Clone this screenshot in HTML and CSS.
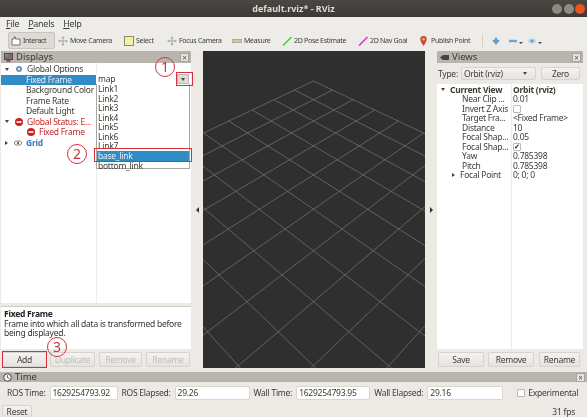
FILE: index.html
```html
<!DOCTYPE html>
<html lang="en">
<head>
<meta charset="utf-8">
<title>default.rviz - RViz</title>
<link rel="stylesheet" href="styles.css">
</head>
<body>
<div class="window">
  <header class="titlebar">
    <span class="title">default.rviz* - RViz</span>
    <div class="winbtns"><i class="wb"></i><i class="wb"></i><i class="wb close"></i></div>
  </header>
  <nav class="menubar"><span><u>F</u>ile</span><span><u>P</u>anels</span><span><u>H</u>elp</span></nav>
  <div class="toolbar">
    <div class="tool active">
      <svg class="ic" viewBox="0 0 10 10"><path d="M1 9V3h2V1h1.500v2H9v6z" fill="#fff" stroke="#555" stroke-width=".8"/></svg>Interact
    </div>
    <div class="tool w-move">
      <svg class="ic" viewBox="0 0 10 10"><path d="M5 0l1.500 2H5.500v2.500H8V3.500L10 5 8 6.500v-1H5.500V8h1L5 10 3.500 8h1V5.500H2v1L0 5l2-1.500v1h2.500V2h-1z" fill="#a3a6a3"/></svg>Move Camera
    </div>
    <div class="tool w-select">
      <svg class="ic" viewBox="0 0 10 10"><rect x=".5" y=".5" width="9" height="9" fill="#f6eea0" stroke="#8b8a70"/></svg>Select
    </div>
    <div class="tool w-focus">
      <svg class="ic" viewBox="0 0 10 10"><path d="M5 0l1.500 2.500h-1v2h2v-1L10 5 7.500 6.500v-1h-2v2h1L5 10 3.500 7.500h1v-2h-2v1L0 5l2.500-1.500v1h2v-2h-1z" fill="#a7a9a7"/></svg>Focus Camera
    </div>
    <div class="tool w-measure">
      <svg class="ic" viewBox="0 0 10 10"><rect x="0" y="3.500" width="10" height="3" fill="#c9c9a8" stroke="#8c8c78" stroke-width=".6"/></svg>Measure
    </div>
    <div class="tool w-pose">
      <svg class="ic" viewBox="0 0 10 10"><path d="M1 9.500L9.500 1" stroke="#33d433" stroke-width="1.500"/></svg>2D Pose Estimate
    </div>
    <div class="tool w-nav">
      <svg class="ic" viewBox="0 0 10 10"><path d="M1 9.500L9.500 1" stroke="#ee1fc8" stroke-width="1.500"/></svg>2D Nav Goal
    </div>
    <div class="tool w-pub">
      <svg class="pin" viewBox="0 0 7 10"><path d="M3.500 0a3.200 3.200 0 0 1 3.200 3.200C6.700 5.500 3.500 10 3.500 10S.3 5.500.3 3.200A3.200 3.200 0 0 1 3.500 0z" fill="#cf4b2a"/><circle cx="3.500" cy="3.200" r="1.200" fill="#eeb49a"/></svg>Publish Point
    </div>
    <div class="toolsep"></div>
    <svg class="tic" viewBox="0 0 10 10"><path d="M3.500 1h3v2.500H9v3H6.500V9h-3V6.500H1v-3h2.500z" fill="#5d9bd0"/></svg>
    <div class="ticgroup">
      <svg class="tic" viewBox="0 0 10 10"><rect x="0" y="3.500" width="10" height="3" fill="#6ea5d6"/></svg><i class="mini"></i>
    </div>
    <div class="ticgroup">
      <svg class="tic" viewBox="0 0 10 10"><ellipse cx="5" cy="5" rx="5" ry="3" fill="#c2d8ea"/><circle cx="5" cy="5" r="2" fill="#5d9bd0"/></svg><i class="mini"></i>
    </div>
  </div>

  <main class="workspace">
    <section class="dock left">
      <div class="dockhead">
        <svg class="dockic" viewBox="0 0 9 9"><rect width="9" height="7" fill="#4a4a52"/><rect x="1" y="1" width="7" height="5" fill="#9a5a7a"/><rect x="1" y="1" width="3.500" height="2.500" fill="#5aa05a"/><rect x="2.500" y="7" width="4" height="2" fill="#666"/></svg>
        <span class="dockname">Displays</span><i class="closex">×</i>
      </div>
      <div class="tree">
        <div class="row"><i class="tri down"></i><svg class="ric" viewBox="0 0 8 8"><circle cx="4" cy="4" r="3" fill="#6a8fc0"/><circle cx="4" cy="4" r="1.200" fill="#dfe8f2"/></svg><span>Global Options</span></div>
        <div class="row selected lvl2"><span>Fixed Frame</span></div>
        <div class="row lvl2"><span>Background Color</span></div>
        <div class="row lvl2"><span>Frame Rate</span></div>
        <div class="row lvl2"><span>Default Light</span></div>
        <div class="row err"><i class="tri down"></i><svg class="ric" viewBox="0 0 8 8"><circle cx="4" cy="4" r="4" fill="#cc1f1f"/><rect x="1.500" y="3.200" width="5" height="1.600" fill="#fff"/></svg><span>Global Status: E...</span></div>
        <div class="row err lvl3"><svg class="ric" viewBox="0 0 8 8"><circle cx="4" cy="4" r="4" fill="#cc1f1f"/><rect x="1.500" y="3.200" width="5" height="1.600" fill="#fff"/></svg><span>Fixed Frame</span></div>
        <div class="row grid"><i class="tri right"></i><svg class="ric" viewBox="0 0 8 8"><ellipse cx="4" cy="4" rx="3.800" ry="2.200" fill="none" stroke="#666" stroke-width=".8"/><circle cx="4" cy="4" r="1.200" fill="#666"/></svg><span>Grid</span></div>
      </div>
      <div class="grip"></div>
      <div class="desc">
        <b>Fixed Frame</b><br>
        Frame into which all data is transformed before being displayed.
      </div>
      <div class="btnrow">
        <button class="btn add">Add</button>
        <button class="btn off dup">Duplicate</button>
        <button class="btn off rem">Remove</button>
        <button class="btn off ren">Rename</button>
      </div>
    </section>

    <div class="handle"><i class="hl"></i></div>

    <div class="viewport">
      <svg class="gridsvg" viewBox="203 51 222 317" preserveAspectRatio="none">
        <path fill="none" stroke="#777775" stroke-width=".7" d="
        M313.500 81L584.560 209.290M294.390 90.040L569.360 229M273.990 99.700L552.600 250.740M252.160 110.030L534 274.830M228.730 121.120L513.300 301.670M203.540 133.040L490.100 331.770M176.380 145.900L463.900 365.750M147 159.800L434.100 404.400M115.100 174.900L399.800 448.800M80.400 191.330L360.100 500.300M42.440 209.290L313.500 560.800
        M313.500 81L42.440 209.290M332.610 90.040L57.640 229M353.010 99.700L74.400 250.740M374.840 110.030L93 274.830M398.270 121.120L113.700 301.670M423.460 133.040L136.900 331.770M450.620 145.900L163.100 365.750M480 159.800L192.900 404.400M511.900 174.900L227.200 448.800M546.600 191.330L266.900 500.300M584.560 209.290L313.500 560.800"/>
      </svg>
    </div>

    <div class="handle"><i class="hr"></i></div>

    <section class="dock right">
      <div class="dockhead">
        <svg class="dockic" viewBox="0 0 9 9"><rect x="3" y="2" width="6" height="5" fill="#444"/><path d="M0 4.500L3 2v5z" fill="#444"/></svg>
        <span class="dockname">Views</span><i class="closex">×</i>
      </div>
      <div class="typerow">
        <span>Type:</span>
        <div class="combo"><span>Orbit (rviz)</span><i class="tri down"></i></div>
        <button class="btn zero">Zero</button>
      </div>
      <div class="tree vtree">
        <div class="vrow"><span class="vname"><i class="tri down"></i><b>Current View</b></span><b>Orbit (rviz)</b></div>
        <div class="vrow"><span class="vname sub">Near Clip ...</span><span>0.01</span></div>
        <div class="vrow"><span class="vname sub">Invert Z Axis</span><i class="check"></i></div>
        <div class="vrow"><span class="vname sub">Target Fra...</span><span>&lt;Fixed Frame&gt;</span></div>
        <div class="vrow"><span class="vname sub">Distance</span><span>10</span></div>
        <div class="vrow"><span class="vname sub">Focal Shap...</span><span>0.05</span></div>
        <div class="vrow"><span class="vname sub">Focal Shap...</span><i class="check">✓</i></div>
        <div class="vrow"><span class="vname sub">Yaw</span><span>0.785398</span></div>
        <div class="vrow"><span class="vname sub">Pitch</span><span>0.785398</span></div>
        <div class="vrow"><span class="vname sub focal"><i class="tri right"></i>Focal Point</span><span>0; 0; 0</span></div>
      </div>
      <div class="btnrow vbtns">
        <button class="btn">Save</button>
        <button class="btn">Remove</button>
        <button class="btn">Rename</button>
      </div>
    </section>
  </main>

  <section class="time">
    <div class="dockhead timehead">
      <svg class="dockic" viewBox="0 0 9 9"><circle cx="4.500" cy="4.500" r="3.800" fill="#f4f2ef" stroke="#444" stroke-width="1"/><path d="M4.500 2.200v2.500l1.800 1" fill="none" stroke="#444" stroke-width=".8"/></svg>
      <span class="dockname">Time</span><i class="closex">×</i>
    </div>
    <div class="timerow">
      <label>ROS Time:</label><span class="field f1">1629254793.92</span>
      <label>ROS Elapsed:</label><span class="field f2">29.26</span>
      <label>Wall Time:</label><span class="field f3">1629254793.95</span>
      <label>Wall Elapsed:</label><span class="field f4">29.16</span>
      <i class="check expcheck"></i><span>Experimental</span>
    </div>
    <div class="statusrow">
      <button class="btn reset">Reset</button>
      <span>31 fps</span>
    </div>
  </section>

  <div class="combofield"><span>map</span><i class="arrowbtn"><i class="tri down"></i></i></div>
  <ul class="popup">
    <li>Link1</li><li>Link2</li><li>Link3</li><li>Link4</li><li>Link5</li><li>Link6</li><li>Link7</li>
    <li class="hi">base_link</li><li>bottom_link</li>
  </ul>

  <i class="mark m-arrow"></i>
  <i class="mark m-base"></i>
  <i class="mark m-add"></i>
  <span class="num n1">1</span>
  <span class="num n2">2</span>
  <span class="num n3">3</span>
</div>
</body>
</html>
```

FILE: styles.css
```css
* { box-sizing: border-box; }
html, body { margin: 0; padding: 0; }
body { width: 587px; height: 417px; overflow: hidden; background: #edeae6; }
i { font-style: normal; display: block; }

.window {
  position: relative;
  width: 587px;
  height: 417px;
  overflow: hidden;
  display: flex;
  flex-direction: column;
  background: #edeae6;
  color: #3c3b37;
  font: 8.5px/10px "Noto Sans", sans-serif;
  letter-spacing: -.25px;
  filter: blur(.4px);
}

.titlebar {
  flex: 0 0 17px;
  display: flex;
  align-items: center;
  justify-content: center;
  position: relative;
  background: linear-gradient(#4a4843, #3b3a36);
  color: #dfdbd2;
  font-size: 9px;
  font-weight: 700;
  letter-spacing: 0;
}
.winbtns { position: absolute; right: 2px; top: 4px; display: flex; gap: 1.500px; }
.wb { width: 10px; height: 10px; border-radius: 50%; background: #8d8a82; }
.wb.close { background: #e9541f; }

.menubar {
  flex: 0 0 13px;
  display: flex;
  gap: 9px;
  align-items: center;
  padding: 0 0 0 6px;
  font-size: 9px;
  letter-spacing: -.3px;
  background: #efedea;
}

.toolbar {
  flex: 0 0 21px;
  display: flex;
  align-items: center;
  padding: 0 0 0 8px;
  background: #eeece8;
  font-size: 7px;
  letter-spacing: -.3px;
}
.tool { display: flex; align-items: center; gap: 2px; white-space: nowrap; height: 17px; }
.tool.active { width: 47px; padding-left: 2px; background: #dedbd6; border: 1px solid #c8c5bf; border-radius: 2px; }
.ic { width: 10px; height: 10px; flex: none; }
.pin { width: 7px; height: 10px; flex: none; margin-right: 2px; }
.w-move { margin-left: 3px; width: 66px; }
.w-select { width: 43px; }
.w-focus { width: 65px; }
.w-measure { width: 50px; }
.w-pose { width: 76px; }
.w-nav { width: 62px; }
.w-pub { width: 55px; }
.toolsep { width: 1px; height: 14px; background: #d6d3cd; margin: 0 9px 0 7px; }
.tic { width: 8px; height: 8px; flex: none; }
.ticgroup { display: flex; align-items: flex-end; margin-left: 8px; }
.ticgroup .tic { width: 10px; }
.mini { width: 0; height: 0; border: 2px solid transparent; border-top: 2px solid #444; border-bottom: 0; margin: 0 0 1px 1px; }
.ticgroup + .ticgroup { margin-left: 4px; }

.workspace { flex: 0 0 321px; display: flex; }

.dock { display: flex; flex-direction: column; }
.dock.left { width: 190px; margin-left: 1px; }
.dock.right { width: 146px; }
.dockhead {
  flex: 0 0 12px;
  display: flex;
  align-items: center;
  gap: 3px;
  padding: 0 2px 0 3px;
  background: #b9b5ae;
  color: #3a3935;
  font-size: 9.500px;
  letter-spacing: 0;
}
.dockic { width: 9px; height: 9px; flex: none; }
.dockname { flex: 1; }
.closex {
  width: 9px; height: 9px;
  background: #e8e5e0;
  border: 1px solid #a6a29b;
  color: #555;
  font-size: 8px;
  line-height: 7px;
  text-align: center;
}

.tree {
  flex: 0 0 240px;
  padding-top: 1px;
  background: linear-gradient(90deg, #fff 95px, #ececea 95px, #ececea 96px, #fff 96px);
}
.row { display: flex; align-items: center; height: 10.500px; padding-left: 4px; white-space: nowrap; }
.row .ric { width: 8px; height: 8px; flex: none; margin: 0 4px 0 6px; }
.row.lvl2 { padding-left: 25px; }
.row.lvl3 { padding-left: 20px; }
.row.selected { background: #308cc6; color: #e8eff5; width: 95px; }
.row.err { color: #c42626; }
.row.grid { color: #3a79bd; font-weight: 700; }

.tri { width: 0; height: 0; flex: none; border: solid transparent; }
.tri.down { border-width: 3px 2.500px 0; border-top-color: #444; }
.tri.right { border-width: 2.500px 0 2.500px 3px; border-left-color: #444; }

.grip { flex: 0 0 4px; border-bottom: 1px solid #cfccc6; }
.desc { flex: 0 0 42px; padding: 2px 3px; background: #fff; line-height: 9.500px; color: #333; }
.desc b { color: #222; }

.btnrow { display: flex; padding-top: 3px; }
.btn {
  height: 15px;
  padding: 0;
  font: inherit;
  letter-spacing: inherit;
  color: #3c3b37;
  background: linear-gradient(#f4f3f1, #e6e3df);
  border: 1px solid #d6d3cd;
  border-radius: 2px;
}
.btn.off { color: #c0bdb7; }
.add { width: 45px; margin-left: 1px; }
.dup { width: 45px; margin-left: 3px; }
.rem { width: 43px; margin-left: 4px; }
.ren { width: 44px; margin-left: 4px; }

.handle { flex: 0 0 12px; height: 317px; display: flex; align-items: center; justify-content: center; }
.hl { width: 0; height: 0; border: solid transparent; border-width: 3px 3px 3px 0; border-right-color: #333; }
.hr { width: 0; height: 0; border: solid transparent; border-width: 3px 0 3px 3px; border-left-color: #333; }

.viewport { flex: 0 0 222px; height: 317px; background: #302f2f; overflow: hidden; }
.gridsvg { display: block; width: 222px; height: 317px; }

.typerow { flex: 0 0 21px; display: flex; align-items: center; padding-left: 1px; gap: 2px; }
.combo {
  width: 75px; height: 13px;
  display: flex; align-items: center; justify-content: space-between;
  padding: 0 8px 0 2px;
  background: linear-gradient(#f4f3f1, #e6e3df);
  border: 1px solid #d6d3cd;
  border-radius: 2px;
  margin-left: 1px;
}
.zero { width: 39px; height: 13px; margin-left: 3px; }
.vtree {
  flex: 0 0 265px;
  padding-top: 1px;
  background: linear-gradient(90deg, #fff 74px, #ececea 74px, #ececea 75px, #fff 75px);
}
.vrow { display: flex; align-items: center; height: 9.500px; white-space: nowrap; }
.vname { flex: 0 0 76px; display: flex; align-items: center; gap: 5px; padding-left: 4px; }
.vname.sub { padding-left: 25px; }
.vname.focal { padding-left: 15px; gap: 5px; }
.check {
  width: 8px; height: 8px;
  background: #fff;
  border: 1px solid #bdbab4;
  border-radius: 1px;
  font-size: 7px;
  font-weight: 700;
  line-height: 6px;
  text-align: center;
  color: #111;
}
.vbtns { padding-top: 3px; }
.vbtns .btn { width: 46px; margin-left: 1px; }
.vbtns .btn + .btn { margin-left: 4px; }
.vbtns .btn:last-child { width: 41px; margin-left: 5px; }

.timehead { flex: 0 0 12px; }
.timerow { display: flex; align-items: center; height: 19px; margin-top: 1px; padding-left: 7px; white-space: nowrap; }
.field {
  height: 14px;
  padding: 0 2px;
  background: #fff;
  border: 1px solid #d9d6d0;
  border-radius: 2px;
  line-height: 12px;
  margin: 0 4px;
}
.f1 { width: 68px; }
.f2 { width: 75px; }
.f3 { width: 74px; }
.f4 { width: 76px; margin-right: 14px; }
.expcheck { margin-right: 3px; }
.statusrow { display: flex; justify-content: space-between; align-items: flex-start; padding: 3px 12px 0 2px; }
.statusrow span { margin-top: 2px; }
.reset { width: 30px; height: 14px; }

.combofield {
  position: absolute; left: 96px; top: 74px;
  width: 93px; height: 10px;
  display: flex; align-items: center; justify-content: space-between;
  padding-left: 2px;
  background: #fff;
}
.arrowbtn {
  width: 12px; height: 10px;
  display: flex; align-items: center; justify-content: center;
  background: #dedbd6;
  border: 1px solid #bdbab4;
}
.popup {
  position: absolute; left: 96px; top: 84px;
  width: 94px; height: 85px;
  margin: 0; padding: 0;
  list-style: none;
  background: #fff;
  border: 1px solid #a9a6a0;
  border-top: 0;
  line-height: 9.500px;
}
.popup li { height: 9.500px; padding-left: 1px; }
.popup li.hi { background: #308cc6; color: #e8eff5; height: 10.500px; }

.mark { position: absolute; border: 1.500px solid #d6303c; }
.m-arrow { left: 176px; top: 72px; width: 17px; height: 14px; }
.m-base { left: 94px; top: 148px; width: 98px; height: 14px; }
.m-add { left: 2px; top: 351px; width: 45px; height: 17px; }
.num {
  position: absolute;
  width: 20px; height: 20px;
  border: 1.200px solid #d6303c;
  border-radius: 50%;
  color: #c23a3a;
  font-size: 14px;
  line-height: 17px;
  letter-spacing: 0;
  text-align: center;
}
.n1 { left: 155px; top: 57px; }
.n2 { left: 67px; top: 144px; }
.n3 { left: 47px; top: 337px; }
```
